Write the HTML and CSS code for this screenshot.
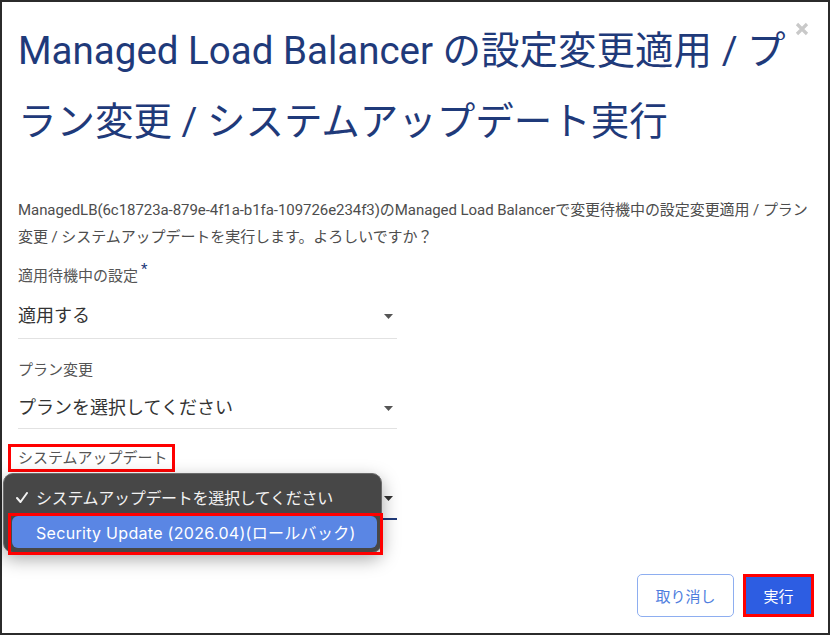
FILE: index.html
```html
<!DOCTYPE html>
<html lang="ja">
<head>
<meta charset="utf-8">
<title>Managed Load Balancer</title>
<link rel="stylesheet" href="styles.css">
</head>
<body>
<div class="modal">
  <button class="close" aria-label="閉じる">
    <svg width="14" height="14" viewBox="0 0 14 14"><path d="M2 2 L12 12 M12 2 L2 12" stroke="#c9c9c9" stroke-width="3.2" fill="none"/></svg>
  </button>
  <h1 class="title">Managed Load Balancer の設定変更適用 / プラン変更 / システムアップデート実行</h1>
  <p class="desc">ManagedLB(6c18723a-879e-4f1a-b1fa-109726e234f3)のManaged Load Balancerで変更待機中の設定変更適用 / プラン変更 / システムアップデートを実行します。よろしいですか？</p>

  <div class="field field-first">
    <div class="label">適用待機中の設定<span class="req">*</span></div>
    <div class="select">
      <span class="value">適用する</span>
      <svg class="arrow" width="9" height="5" viewBox="0 0 9 5"><path d="M0 0 H9 L4.5 5 Z" fill="#555"/></svg>
    </div>
  </div>

  <div class="field">
    <div class="label">プラン変更</div>
    <div class="select">
      <span class="value">プランを選択してください</span>
      <svg class="arrow" width="9" height="5" viewBox="0 0 9 5"><path d="M0 0 H9 L4.5 5 Z" fill="#555"/></svg>
    </div>
  </div>

  <div class="field">
    <div class="label"><span class="mark">システムアップデート</span></div>
    <div class="select focused">
      <span class="value"></span>
      <svg class="arrow" width="9" height="5" viewBox="0 0 9 5"><path d="M0 0 H9 L4.5 5 Z" fill="#333"/></svg>
    </div>
  </div>

  <div class="footer">
    <button class="btn btn-cancel">取り消し</button>
    <button class="btn btn-run">実行</button>
  </div>

  <div class="menu">
    <div class="item">
      <span class="check"><svg width="12" height="11" viewBox="0 0 12 11"><path d="M1 6 L4.5 10 L11 1" stroke="#f2f2f2" stroke-width="2" fill="none" stroke-linecap="round" stroke-linejoin="round"/></svg></span>
      <span class="item-text">システムアップデートを選択してください</span>
    </div>
    <div class="item active">
      <span class="check"></span>
      <span class="item-text">Security Update (2026.04)(ロールバック)</span>
    </div>
  </div>
</div>
</body>
</html>
```

FILE: styles.css
```css
html, body {
  margin: 0;
  padding: 0;
  background: #ffffff;
}

body {
  font-family: Roboto, "Noto Sans CJK JP", sans-serif;
}

.modal {
  position: relative;
  box-sizing: border-box;
  width: 830px;
  height: 635px;
  border: 2px solid #2b2b2b;
  padding: 0 17px 16px 16px;
  display: flex;
  flex-direction: column;
  background: #fff;
}

.close {
  position: absolute;
  top: 20px;
  right: 19px;
  width: 14px;
  height: 14px;
  padding: 0;
  border: 0;
  background: none;
  display: flex;
}

.title {
  margin: 13px 0 0;
  font-size: 38.5px;
  line-height: 71px;
  font-weight: 400;
  color: #1f3a7a;
}

.desc {
  margin: 40px 0 0;
  font-size: 15px;
  line-height: 27px;
  letter-spacing: -0.06px;
  color: #4d4d4d;
}

.field {
  width: 379px;
  margin-top: 21px;
}

.field-first {
  margin-top: 15px;
}

.label {
  height: 20px;
  font-size: 15px;
  line-height: 20px;
  color: #555;
}

.req {
  color: #1f3a7a;
  font-size: 15px;
  line-height: 0;
  vertical-align: 7px;
  margin-left: 3px;
}

.mark {
  display: inline-block;
  height: 22px;
  line-height: 22px;
  padding: 0 4px 0 7px;
  border: 3px solid #ff0000;
  margin: -6px 0 -2px -10px;
  vertical-align: top;
}

.select {
  display: flex;
  align-items: center;
  min-height: 24px;
  padding: 16px 0 8px;
  border-bottom: 1px solid #e2e2e2;
  font-size: 18px;
  line-height: 24px;
  color: #333;
}

.field-first .select {
  padding: 18px 0 10px;
}

.select.focused {
  border-bottom: 2px solid #1f3a7a;
}

.value {
  flex: 1;
  min-height: 24px;
}

.arrow {
  margin-right: 4px;
}

.footer {
  margin-top: auto;
  display: flex;
  justify-content: flex-end;
  align-items: center;
  gap: 12px;
}

.btn {
  font-family: Roboto, "Noto Sans CJK JP", sans-serif;
  font-size: 15px;
  border-radius: 5px;
  cursor: pointer;
}

.btn-cancel {
  height: 43px;
  width: 97px;
  border: 1px solid #8eaef0;
  background: #fff;
  color: #4f7ede;
}

.btn-run {
  height: 37px;
  width: 65px;
  border: 0;
  border-radius: 0;
  background: #2d5de2;
  color: #fff;
  outline: 3px solid #ff0000;
  outline-offset: 0;
}

.menu {
  position: absolute;
  left: 1px;
  top: 471px;
  box-sizing: border-box;
  width: 379px;
  height: 80px;
  padding: 7px 4px 4px 8px;
  border: 1px solid #6b6b6b;
  border-radius: 10px;
  background: #474747;
  box-shadow: 0 6px 18px rgba(0, 0, 0, 0.35);
  display: flex;
  flex-direction: column;
  gap: 3px;
  font-family: Inter, "Noto Sans CJK JP", sans-serif;
  font-size: 16px;
  color: #f2f2f2;
}

.item {
  position: relative;
  height: 32px;
  display: flex;
  align-items: center;
  padding-left: 4px;
  border-radius: 6px;
}

.item:first-child .item-text {
  letter-spacing: -0.3px;
}

.check {
  width: 20px;
  display: flex;
  align-items: center;
}

.item.active {
  background: #5a86e4;
  color: #fff;
}

.item.active .item-text {
  letter-spacing: 0.3px;
}

.item.active::after {
  content: "";
  position: absolute;
  top: -3px;
  left: -4px;
  right: -6px;
  bottom: -7px;
  border: 3px solid #ff0000;
}
```
